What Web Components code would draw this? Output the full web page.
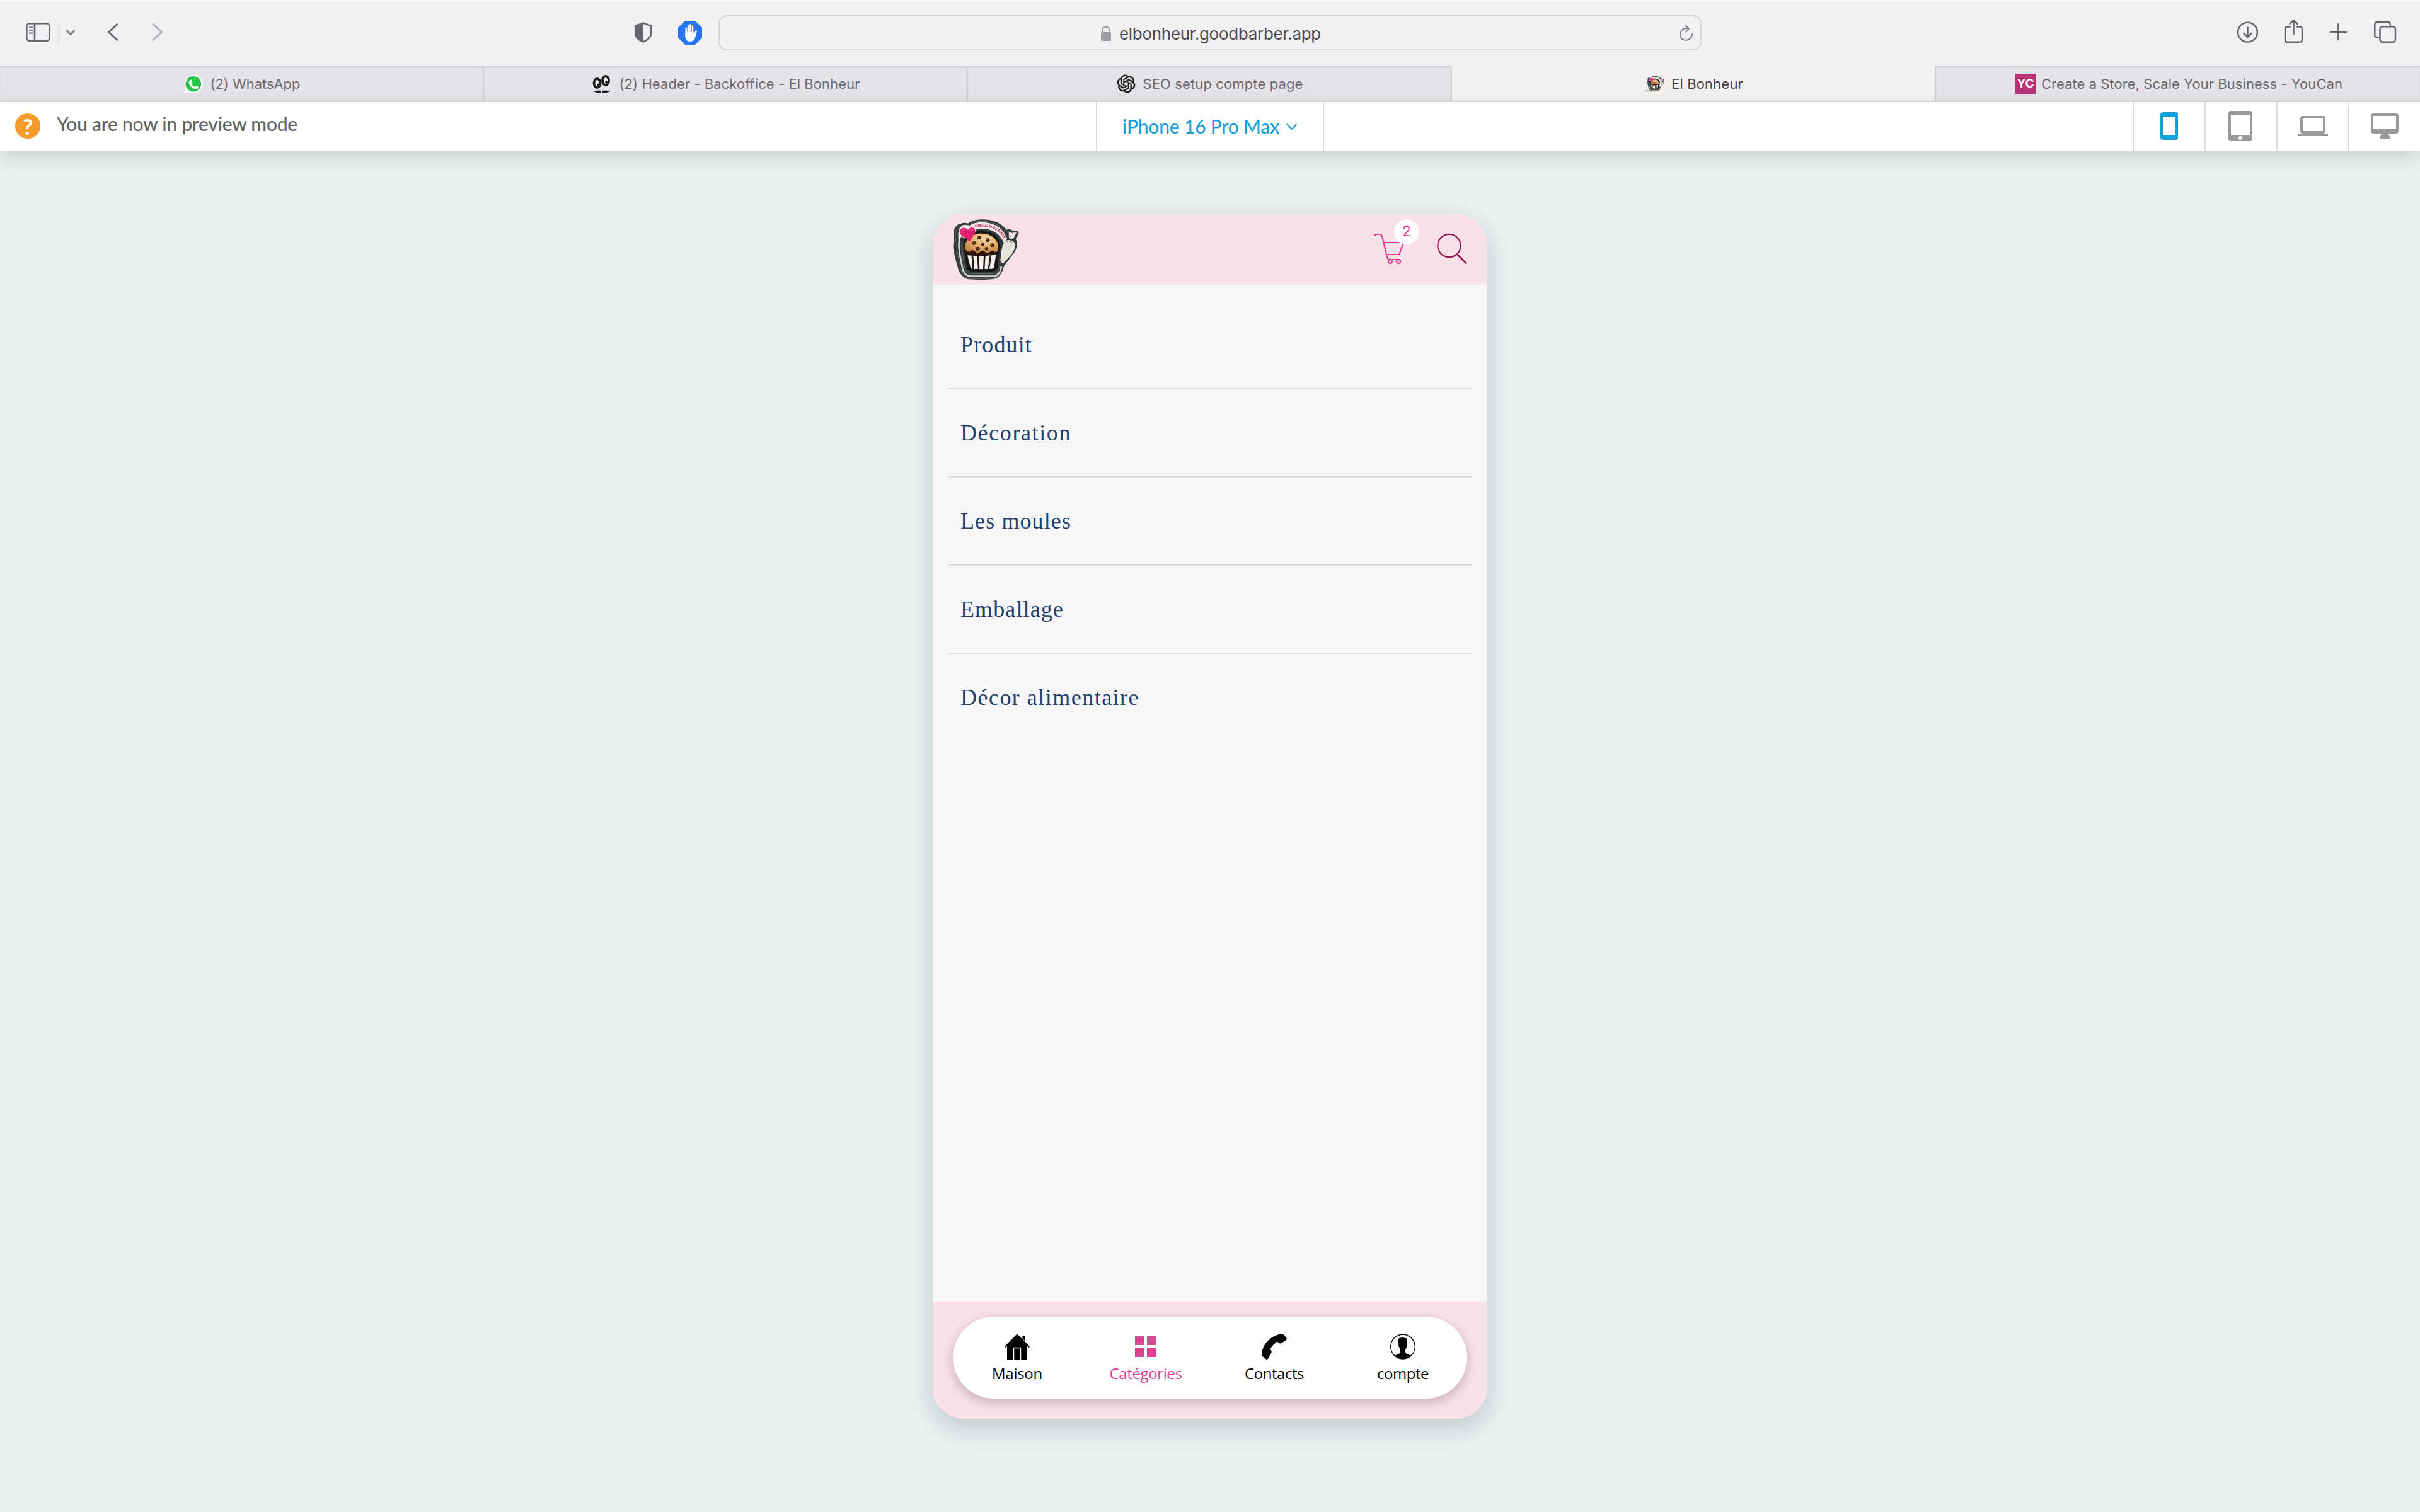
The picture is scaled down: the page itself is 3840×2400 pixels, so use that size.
<!DOCTYPE html>
<html lang="fr">
<head>
<meta charset="utf-8">
<title>El Bonheur</title>
<style>
html,body{margin:0;padding:0;width:3840px;height:2400px;overflow:hidden;background:#ebf1f1}
</style>
</head>
<body>
<preview-page></preview-page>
<script>
const sheet = (host, html) => { host.attachShadow({mode:'open'}).innerHTML = html; };

/* Cupcake emblem, shared by the app header and the tab favicon */
const cupcake = `
<path d="M162 185Q157 160 160 140Q165 112 190 105Q210 97 228 103Q245 86 290 84Q350 82 388 110Q402 120 411 134L416 131Q426 128 438 136L463 138L470 148L455 178Q462 185 461 205Q459 232 440 252L400 306Q390 345 368 362Q350 372 280 371L230 369Q196 360 183 325Q166 270 158 222Q156 203 162 185Z" fill="#343b3c"/>
<path d="M170 190Q166 160 170 142Q175 118 200 112Q218 108 230 112" fill="none" stroke="#687071" stroke-width="3"/>
<path d="M228 114Q245 94 292 93Q345 92 378 116Q397 130 404 146" fill="none" stroke="#788082" stroke-width="3"/>
<path d="M184 190Q176 140 192 120Q208 104 234 114Q256 98 290 97Q342 97 376 121Q402 144 414 176L398 196Q384 158 345 138Q305 122 268 132L262 150L232 188Q212 175 196 165Q190 175 191 190Z" fill="#efe8e4"/>
<path d="M186 185Q182 215 190 256L202 318Q211 351 236 354L350 355Q379 352 387 308" fill="none" stroke="#dcd6d0" stroke-width="8"/>
<path d="M174 195Q173 220 183 268L192 318Q203 361 232 366L345 367Q364 364 378 350" fill="none" stroke="#737a7a" stroke-width="2"/>
<path d="M198 195Q197 215 204 260L214 318Q219 341 240 343H350Q372 339 380 300" fill="none" stroke="#626a6b" stroke-width="3"/>
<path d="M206 200Q214 142 292 139Q372 142 380 205L368 315Q362 332 340 332H250Q227 332 222 314Z" fill="#151616"/>
<path d="M225 254L240 314Q243 320 250 321L245 256Z M253 256L258 320H275L272 258Z M280 258L283 321H300L303 257Z M311 257L307 320H323L332 255Z M340 254L330 319H346L352 314L361 252Z" fill="#f7ecec"/>
<path d="M215 228Q224 260 250 252Q268 266 290 253Q312 267 332 249Q355 259 370 235L362 222H225Z" fill="#34170c"/>
<path d="M212 222Q210 198 232 174Q260 148 295 151Q345 152 366 190Q376 213 371 230Q362 247 350 234Q340 230 332 239Q319 249 306 236Q294 228 282 240Q270 250 259 234Q244 227 239 236Q224 243 212 222Z" fill="url(#bake)"/>
<g fill="#46201a"><circle cx="282" cy="171" r="9"/><circle cx="322" cy="182" r="9"/><circle cx="256" cy="196" r="9"/><circle cx="297" cy="202" r="9"/><circle cx="343" cy="207" r="9"/><circle cx="275" cy="223" r="9"/><circle cx="316" cy="224" r="8"/></g>
<g fill="#b08574"><circle cx="279" cy="168" r="2.5"/><circle cx="319" cy="179" r="2.5"/><circle cx="253" cy="193" r="2.5"/><circle cx="294" cy="199" r="2.5"/><circle cx="340" cy="204" r="2.5"/><circle cx="272" cy="220" r="2.5"/><circle cx="313" cy="221" r="2.5"/></g>
<path d="M235 190Q222 175 201 163Q185 151 189 137Q196 121 213 124Q223 127 228 134Q236 120 250 122Q266 129 262 146Q258 158 249 168Z" fill="#e0206c"/>
<path d="M198 145Q199 132 212 133M240 132Q249 129 252 136" fill="none" stroke="#f05c98" stroke-width="4" stroke-linecap="round"/>
<path d="M404 188Q420 177 440 187Q456 194 452 216Q446 240 430 256L397 292Q385 295 382 280Q384 240 393 207Z" fill="#e6e0da"/>
<path d="M398 205L390 260M447 208L438 232" stroke="#f5f1ec" stroke-width="4" stroke-linecap="round"/>
<path d="M382 286L397 292L386 306L377 303Z" fill="#3c4242"/>
<path d="M420 139L437 147L462 143L447 172L440 178H427L421 168Z" fill="#efe0e2" stroke="#343b3c" stroke-width="3"/>
<path d="M433 160V174M416 192L420 187M431 189L437 196" stroke="#343b3c" stroke-width="4"/>`;
const bake = `<defs><radialGradient id="bake" cx=".6" cy=".25" r=".8"><stop offset="0" stop-color="#f6d6a0"/><stop offset=".55" stop-color="#e2ac68"/><stop offset="1" stop-color="#c08040"/></radialGradient></defs>`;

/* name: [viewBox, markup]; one unit is one pixel unless a size is listed third */
const ICONS = {
 sidebar:['40 32 40 40','<g fill="none" stroke="#69666b" stroke-width="2.6"><rect x="42.3" y="37.3" width="36" height="27.6" rx="4.5"/><path d="M55 37v28"/><path d="M46 43.5h6M46 48h6M46 52.5h6" stroke-width="2"/></g>'],
 chev:['104 32 16 40','<path d="M106.5 49l5.5 5.8 5.500-5.800" fill="none" stroke="#828086" stroke-width="3" stroke-linecap="round" stroke-linejoin="round"/>'],
 back:['170 32 18 40','<path d="M186 38.500L172.500 51 186 63.500" fill="none" stroke="#69666b" stroke-width="3" stroke-linecap="round" stroke-linejoin="round"/>'],
 fwd:['241 32 18 40','<path d="M243 38.500L256.500 51 243 63.500" fill="none" stroke="#b3b1b5" stroke-width="3" stroke-linecap="round" stroke-linejoin="round"/>'],
 shield:['1006 32 29 40','<path d="M1020.500 36.500L1033 41V54Q1032 62 1020.500 66.500Q1009 62 1008.200 54V41Z" fill="none" stroke="#69666b" stroke-width="2.600" stroke-linejoin="round"/><path d="M1020.500 36L1008 41V54Q1009 62 1020.500 67Z" fill="#69666b"/>'],
 block:['1076 32 38 40','<path d="M1087 33h16l11 11v16l-11 11h-16l-11-11V44Z" fill="#2377f6"/><g stroke="#fff" stroke-width="2.600" stroke-linecap="round"><path d="M1088.800 45v14M1092 41v14M1095.500 39.500v14M1099 41.500v14"/></g><path d="M1087.500 51H1100.300V54L1103 49.500Q1104.500 47.500 1106 49L1103.500 58Q1102 66 1095 66Q1088 66 1087.500 59Z" fill="#fff"/>'],
 lock:['1746 40 18 26','<rect x="1747" y="51" width="16" height="14" rx="2" fill="#9d9ca0"/><path d="M1749.500 52v-4.500Q1749.500 43 1755 43T1760.500 47.500V52" fill="none" stroke="#9d9ca0" stroke-width="2"/>'],
 reload:['2663 37 26 30','<path d="M2679 44.300Q2672 43 2668.300 47.500Q2663.500 54 2668 60Q2675 66 2682 60Q2685 57 2685 53" fill="none" stroke="#828085" stroke-width="2" stroke-linecap="round"/><path d="M2675 39.800L2680 44.500 2675 49.500" fill="none" stroke="#828085" stroke-width="2" stroke-linecap="round" stroke-linejoin="round"/>'],
 download:['3549 32 35 40','<g fill="none" stroke="#69666b" stroke-width="2.500" stroke-linecap="round" stroke-linejoin="round"><circle cx="3566.500" cy="51.200" r="15.400"/><path d="M3566.500 43.500v15M3560.500 53l6 6 6-6"/></g>'],
 share:['3624 29 31 46','<g fill="none" stroke="#69666b" stroke-width="2.500" stroke-linecap="round" stroke-linejoin="round"><path d="M3634 42.500h-4.500q-3.500 0-3.500 3.500v17.500q0 3.300 3.500 3.300h20q3.500 0 3.500-3.300V46q0-3.500-3.500-3.500H3645"/><path d="M3639.500 54V32.500M3633.500 38l6-5.800 6 5.800"/></g>'],
 plus:['3696 32 29 40','<path d="M3698 50.700h25M3710.500 38.200v25" stroke="#69666b" stroke-width="2.700" stroke-linecap="round"/>'],
 tabs:['3766 32 37 40','<g fill="none" stroke="#69666b" stroke-width="2.500"><rect x="3776.500" y="42.200" width="24.500" height="24.600" rx="4"/><path d="M3776 59.500h-4.500q-3.200 0-3.200-3.500V38.500q0-3.500 3.500-3.500h17.500q3.500 0 3.500 3.500V42"/></g>'],
 whatsapp:['290 116 32 32','<path d="M306.800 118a14.300 14.300 0 1 1-6.500 26.900l-8 2.100 2.300-7.500A14.300 14.300 0 0 1 306.800 118Z" fill="#fff"/><circle cx="306.800" cy="132.300" r="12.300" fill="#25c34a"/><path d="M301.500 125.800l2.200.2 1.700 4-1.500 2.100q1.600 3.300 5.300 4.900l2-2.100 3.600 1.800q0 3.400-3.700 3.800-5 .1-9.200-5.200-4.400-6-.4-9.500Z" fill="#fff"/>'],
 barber:['938 116 34 32','<g fill="#f7f7f7" stroke="#181818" stroke-width="3.800"><ellipse cx="947.500" cy="131" rx="5" ry="7"/><ellipse cx="961" cy="127" rx="5" ry="7"/></g><circle cx="949" cy="133.500" r="2" fill="#181818"/><circle cx="962" cy="129.500" r="2" fill="#181818"/><path d="M940 143.500Q947 142.500 954 142.800V147Q946 146.500 940 143.500ZM970 143Q963 142.500 956 142.800V147Q964 146.500 970 143Z" fill="#181818"/>'],
 openai:['-1.500 -1.500 27 27','<path stroke="#111" stroke-width=".4" fill="#111" d="M22.2819 9.8211a5.9847 5.9847 0 0 0-.5157-4.9108 6.0462 6.0462 0 0 0-6.5098-2.9A6.0651 6.0651 0 0 0 4.9807 4.1818a5.9847 5.9847 0 0 0-3.9977 2.9 6.0462 6.0462 0 0 0 .7427 7.0966 5.98 5.98 0 0 0 .511 4.9107 6.051 6.051 0 0 0 6.5146 2.9001A5.9847 5.9847 0 0 0 13.2599 24a6.0557 6.0557 0 0 0 5.7718-4.2058 5.9894 5.9894 0 0 0 3.9977-2.9001 6.0557 6.0557 0 0 0-.7475-7.0729zm-9.022 12.6081a4.4755 4.4755 0 0 1-2.8764-1.0408l.1419-.0804 4.7783-2.7582a.7948.7948 0 0 0 .3927-.6813v-6.7369l2.02 1.1686a.071.071 0 0 1 .038.052v5.5826a4.504 4.504 0 0 1-4.4945 4.4944zm-9.6607-4.1254a4.4708 4.4708 0 0 1-.5346-3.0137l.142.0852 4.783 2.7582a.7712.7712 0 0 0 .7806 0l5.8428-3.3685v2.3324a.0804.0804 0 0 1-.0332.0615L9.74 19.9502a4.4992 4.4992 0 0 1-6.1408-1.6464zM2.3408 7.8956a4.485 4.485 0 0 1 2.3655-1.9728V11.6a.7664.7664 0 0 0 .3879.6765l5.8144 3.3543-2.0201 1.1685a.0757.0757 0 0 1-.071 0l-4.8303-2.7865A4.504 4.504 0 0 1 2.3408 7.872zm16.5963 3.8558L13.1038 8.364 15.1192 7.2a.0757.0757 0 0 1 .071 0l4.8303 2.7913a4.4944 4.4944 0 0 1-.6765 8.1042v-5.6772a.79.79 0 0 0-.407-.667zm2.0107-3.0231l-.142-.0852-4.7735-2.7818a.7759.7759 0 0 0-.7854 0L9.409 9.2297V6.8974a.0662.0662 0 0 1 .0284-.0615l4.8303-2.7866a4.4992 4.4992 0 0 1 6.6802 4.66zM8.3065 12.863l-2.02-1.1638a.0804.0804 0 0 1-.038-.0567V6.0742a4.4992 4.4992 0 0 1 7.3757-3.4537l-.142.0805L8.704 5.459a.7948.7948 0 0 0-.3927.6813zm1.0976-2.3654l2.602-1.4998 2.6069 1.4998v2.9994l-2.5974 1.4997-2.6067-1.4997Z"/>','32 32'],
 favicon:['120 40 380 380',bake+'<path d="M120 40h380v380H120Z" fill="#f8f0ec"/><path d="M120 350h200v30H120Z" fill="#cfc6c2"/>'+cupcake,'32 32'],
 emblem:['150 80 324 300',bake+cupcake+'<path id="arc" d="M262 123Q330 108 374 145Q391 160 402 184" fill="none"/><text font-family="Open Sans, sans-serif" font-size="18" font-weight="700" fill="#c81e60"><textPath href="#arc" textLength="157" lengthAdjust="spacingAndGlyphs">EMBALLAGE DU BONHE</textPath></text>','108 100'],
 caret:['2040 192 19 16','<path d="M2042 197l7.700 8 7.700-8" fill="none" stroke="#199edb" stroke-width="2.200"/>'],
 phone:['3412 170 60 60','<rect x="3428" y="178" width="28" height="44" rx="4" fill="#199edb"/><path d="M3432 186h20v28h-20Z" fill="#fff"/>'],
 tablet:['3526 170 60 60','<rect x="3536" y="176" width="38" height="48" rx="4" fill="#999"/><path d="M3540 182h30v32h-30Z" fill="#fff"/><circle cx="3555" cy="219" r="3" fill="#fff"/>'],
 laptop:['3640 170 60 60','<path d="M3654 184h32q4 0 4 4v20q0 3-3 4h7v4h-48v-4h7q-3-1-3-4v-20q0-4 4-4Z" fill="#999"/><path d="M3654 188h32v20h-32Z" fill="#fff"/>'],
 desktop:['3754 170 60 60','<path d="M3766 180h36q4 0 4 4v24q0 4-4 4h-12q1 4 2 5v3h-16v-3q2-1 3-5h-13q-4 0-4-4v-24q0-4 4-4Z" fill="#999"/><path d="M3766 184h36v20h-36Z" fill="#fff"/>'],
 cart:['2178 369 54 52','<g fill="none" stroke="#e0408f" stroke-width="2.2"><path d="M2182 373l1.500-1h6q3 0 3.700 3.500L2201 408q1 4 4 4h17M2196 385h32M2200.500 404h19.800l8-22"/><circle cx="2206" cy="415" r="3.200"/><circle cx="2219" cy="415" r="3.200"/></g><circle cx="2182.200" cy="373" r="2" fill="#e0408f"/>'],
 search:['2279 369 50 52','<g fill="none" stroke="#9b1858" stroke-width="2.2"><circle cx="2299.500" cy="390" r="18.200"/><path d="M2312 403.500L2327 418.500" stroke-width="2.600"/></g>'],
 home:['1594 2117 40 41','<path d="M1614 2117.300L1622.500 2125.500V2121h4.500v9l7 7.200-1 1.800-3-2.500V2158H1598V2136.500l-3 2.500-1-1.800Z" fill="#000"/><path d="M1608.500 2158v-18.400h11V2158" fill="none" stroke="#fff" stroke-width="1.500"/><path d="M1622 2124.500l6 6" stroke="#fff" stroke-width="1"/>'],
 grid:['1798 2117 40 41','<path d="M1801 2121h14v14h-14ZM1820 2121h14v14h-14ZM1801 2140h14v14h-14ZM1820 2140h14v14h-14Z" fill="#e0408f"/>'],
 call:['2002 2117 40 41','<path d="M2034 2117.500q2-.3 3.300 1.200l4 5q1.200 1.800-.6 3.300l-6.700 4.800q-2 1.300-4 0l-3.800-2.300q-6.200 4.500-10.700 11.800l2 3.300q.7 1.400-.2 3l-4.800 8.500q-1.600 2.800-4 1.200l-5-4.300q-1.600-1.300-1.500-3.300Q2003 2136 2013 2127T2034 2117.500Z" fill="#000"/>'],
 person:['2206 2117 40 41','<circle cx="2226" cy="2137.500" r="19.300" fill="none" stroke="#000" stroke-width="1.400"/><path d="M2219 2129q-.5-5.500 3-5.500 4-1.300 8 .2 3.500.7 3 5.500l-.3 5q1.300 2-.6 4l-2 4v4q.5 2.500 4.500 3.500l5 2.300q-5.500 5.400-13.600 5.400t-13.600-5.400l5-2.300q4.400-1.200 4.600-3.500v-4l-2-4q-2-2-.7-4Z" fill="#000"/>'],
};

customElements.define('ui-icon', class extends HTMLElement{
  connectedCallback(){
    const [vb,body,size] = ICONS[this.getAttribute('name')];
    const [w,h] = size ? size.split(' ') : vb.split(' ').slice(2);
    sheet(this, `<style>:host{display:block;flex:none;width:${w}px;height:${h}px}svg{display:block}</style><svg width="${w}" height="${h}" viewBox="${vb}">${body}</svg>`);
  }
});

/* Single-line label tracked out to a given measure */
customElements.define('fit-text', class extends HTMLElement{
  connectedCallback(){
    sheet(this, `<style>:host{display:block;white-space:nowrap;flex:none}span{display:inline-block}</style><span><slot></slot></span>`);
    const span = this.shadowRoot.querySelector('span');
    const target = +this.getAttribute('w');
    const spacing = (target - span.getBoundingClientRect().width) / this.textContent.length;
    span.style.letterSpacing = spacing.toFixed(3) + 'px';
    this.style.width = target + 'px';
  }
});

customElements.define('browser-toolbar', class extends HTMLElement{
  constructor(){ super(); sheet(this, `<style>
  :host{display:grid;grid-template-columns:1140px 1560px 1140px;align-items:center;height:104px;box-sizing:border-box;background:#f3f0f4;box-shadow:inset 0 2px #faf8fb;font-family:Inter,sans-serif}
  .side{display:flex;align-items:center}
  .left{padding:0 26px 0 40px}
  .right{justify-content:flex-end;gap:41px;padding-right:37px}
  .rule{width:2px;height:36px;background:#e4e2e6;margin:0 10px 0 12px}
  .address{display:flex;align-items:center;height:56px;box-sizing:border-box;border:2px solid #d6d4d8;border-radius:14px;padding:2px 9px 0 604px}
  .url{font-size:26px;color:#4b494d;margin-left:12px}
  </style>
  <div class="side left"><ui-icon name="sidebar"></ui-icon><div class="rule"></div><ui-icon name="chev"></ui-icon><ui-icon name="back" style="margin-left:50px"></ui-icon><ui-icon name="fwd" style="margin-left:53px"></ui-icon><ui-icon name="shield" style="margin-left:auto"></ui-icon><ui-icon name="block" style="margin-left:41px"></ui-icon></div>
  <div class="address"><ui-icon name="lock"></ui-icon><fit-text class="url" w="320">elbonheur.goodbarber.app</fit-text><ui-icon name="reload" style="margin-left:auto"></ui-icon></div>
  <div class="side right"><ui-icon name="download" style="margin-right:-1px"></ui-icon><ui-icon name="share"></ui-icon><ui-icon name="plus"></ui-icon><ui-icon name="tabs"></ui-icon></div>`); }
});

customElements.define('browser-tab', class extends HTMLElement{
  constructor(){ super(); sheet(this, `<style>
  :host{display:flex;align-items:center;justify-content:center;gap:11px;box-sizing:border-box;background:#e5e3e7;border-right:2px solid #d3d1d5;box-shadow:inset 0 1px #bebcc0,inset 0 3px 3px -1px #cbc9cd;color:#6b686d;padding-top:1px}
  :host([active]){background:#f3f0f4;box-shadow:none;color:#454346}
  :host([last]){border-right:0}
  </style><slot></slot>`); }
});

customElements.define('tab-strip', class extends HTMLElement{
  constructor(){ super(); sheet(this, `<style>
  :host{display:grid;grid-template-columns:repeat(5,768px);height:58px;box-sizing:border-box;border-bottom:2px solid #dad8db;font:22px Inter,sans-serif}
  .yc{display:flex;align-items:center;justify-content:center;width:32px;height:32px;background:#b93377;color:#fff;font-size:19px;font-weight:700}
  </style>
  <browser-tab><ui-icon name="whatsapp"></ui-icon><fit-text w="143" style="margin-left:1px">(2) WhatsApp</fit-text></browser-tab>
  <browser-tab><ui-icon name="barber"></ui-icon><fit-text w="382">(2) Header - Backoffice - El Bonheur</fit-text></browser-tab>
  <browser-tab><ui-icon name="openai"></ui-icon><fit-text w="254">SEO setup compte page</fit-text></browser-tab>
  <browser-tab active style="gap:9px;padding-left:3px"><ui-icon name="favicon"></ui-icon><fit-text w="114">El Bonheur</fit-text></browser-tab>
  <browser-tab last style="gap:9px;padding-left:3px"><div class="yc">YC</div><fit-text w="478">Create a Store, Scale Your Business - YouCan</fit-text></browser-tab>`); }
});

customElements.define('preview-bar', class extends HTMLElement{
  constructor(){ super(); sheet(this, `<style>
  :host{display:grid;grid-template-columns:1739px 362px 1fr;height:78px;background:#fff;box-shadow:0 10px 32px rgba(0,0,0,.14);font:500 30px Lato,sans-serif}
  .note,.model,.devices{display:flex;align-items:center;box-sizing:border-box;height:78px}
  .note{padding:0 0 2px 24px;gap:26px;color:#626262}
  .help{width:40px;height:40px;border-radius:50%;background:#f39c2c;color:#fff;font-size:35px;line-height:40px;text-align:center;font-weight:700}
  .note fit-text{padding-bottom:8px}
  .model{border:solid #dcdcdc;border-width:0 2px;padding:0 0 2px 40px;gap:10px;color:#199edb}
  .model fit-text{padding-bottom:1px}
  .devices{justify-content:flex-end}
  .cell{display:flex;align-items:center;justify-content:center;width:114px;height:78px;box-sizing:border-box;border-left:2px solid #dcdcdc;padding-bottom:2px}
  </style>
  <div class="note"><div class="help">?</div><fit-text w="382">You are now in preview mode</fit-text></div>
  <div class="model"><fit-text w="249">iPhone 16 Pro Max</fit-text><ui-icon name="caret"></ui-icon></div>
  <div class="devices"><div class="cell"><ui-icon name="phone"></ui-icon></div><div class="cell"><ui-icon name="tablet"></ui-icon></div><div class="cell"><ui-icon name="laptop"></ui-icon></div><div class="cell"><ui-icon name="desktop"></ui-icon></div></div>`); }
});

customElements.define('category-row', class extends HTMLElement{
  constructor(){ super(); sheet(this, `<style>
  :host{display:flex;align-items:center;height:140px;box-sizing:border-box;margin:0 24px;padding:0 20px 1px;border-bottom:2px solid #dcdcdc;font:36px "Liberation Serif",serif;color:#20426d}
  :host([last]){border-color:transparent}
  </style><slot></slot>`); }
});

customElements.define('nav-item', class extends HTMLElement{
  constructor(){ super(); sheet(this, `<style>
  :host{display:flex;flex-direction:column;align-items:center;gap:6px;padding-top:27px;font:24px/32px "Open Sans","Noto Sans",sans-serif;color:#000}
  :host([active]){color:#e0408f}
  </style><slot name="icon"></slot><slot></slot>`); }
});

customElements.define('phone-frame', class extends HTMLElement{
  constructor(){ super(); sheet(this, `<style>
  :host{display:flex;flex-direction:column;width:880px;height:1912px;border-radius:50px;overflow:hidden;background:#f7f7f7;box-shadow:0 14px 42px rgba(0,16,30,.19)}
  header{display:flex;align-items:flex-start;height:112px;box-sizing:border-box;background:#f8e1e7;padding:7px 31px 0 30px;flex:none}
  .cart{position:relative;margin:22px 0 0 auto}
  .badge{position:absolute;left:34px;top:-21px;width:40px;height:40px;border-radius:50%;background:#fff;color:#e0408f;font:400 23px/39px Roboto,sans-serif;text-align:center}
  .search{margin:22px 0 0 47px}
  main{flex:1;padding-top:26px}
  footer{height:186px;flex:none;box-sizing:border-box;background:#f8e1e7;padding:24px 32px 32px}
  nav{display:grid;grid-template-columns:repeat(4,204px);height:130px;border-radius:65px;background:#fff;box-shadow:0 6px 18px rgba(40,0,10,.23)}
  </style>
  <header><ui-icon name="emblem"></ui-icon><div class="cart"><ui-icon name="cart"></ui-icon><div class="badge">2</div></div><ui-icon class="search" name="search"></ui-icon></header>
  <main>
  <category-row><fit-text w="114">Produit</fit-text></category-row>
  <category-row><fit-text w="176">Décoration</fit-text></category-row>
  <category-row><fit-text w="176">Les moules</fit-text></category-row>
  <category-row><fit-text w="164">Emballage</fit-text></category-row>
  <category-row last><fit-text w="284">Décor alimentaire</fit-text></category-row>
  </main>
  <footer><nav>
  <nav-item><ui-icon slot="icon" name="home"></ui-icon><fit-text w="80">Maison</fit-text></nav-item>
  <nav-item active><ui-icon slot="icon" name="grid"></ui-icon><fit-text w="115">Catégories</fit-text></nav-item>
  <nav-item><ui-icon slot="icon" name="call"></ui-icon><fit-text w="94">Contacts</fit-text></nav-item>
  <nav-item><ui-icon slot="icon" name="person"></ui-icon><fit-text w="82">compte</fit-text></nav-item>
  </nav></footer>`); }
});

customElements.define('preview-page', class extends HTMLElement{
  constructor(){ super(); sheet(this, `<style>
  :host{display:flex;flex-direction:column;width:3840px;height:2400px;background:#ebf1f1}
  .stage{display:flex;justify-content:center;padding-top:100px}
  </style><browser-toolbar></browser-toolbar><tab-strip></tab-strip><preview-bar></preview-bar><div class="stage"><phone-frame></phone-frame></div>`); }
});
</script>
</body>
</html>
